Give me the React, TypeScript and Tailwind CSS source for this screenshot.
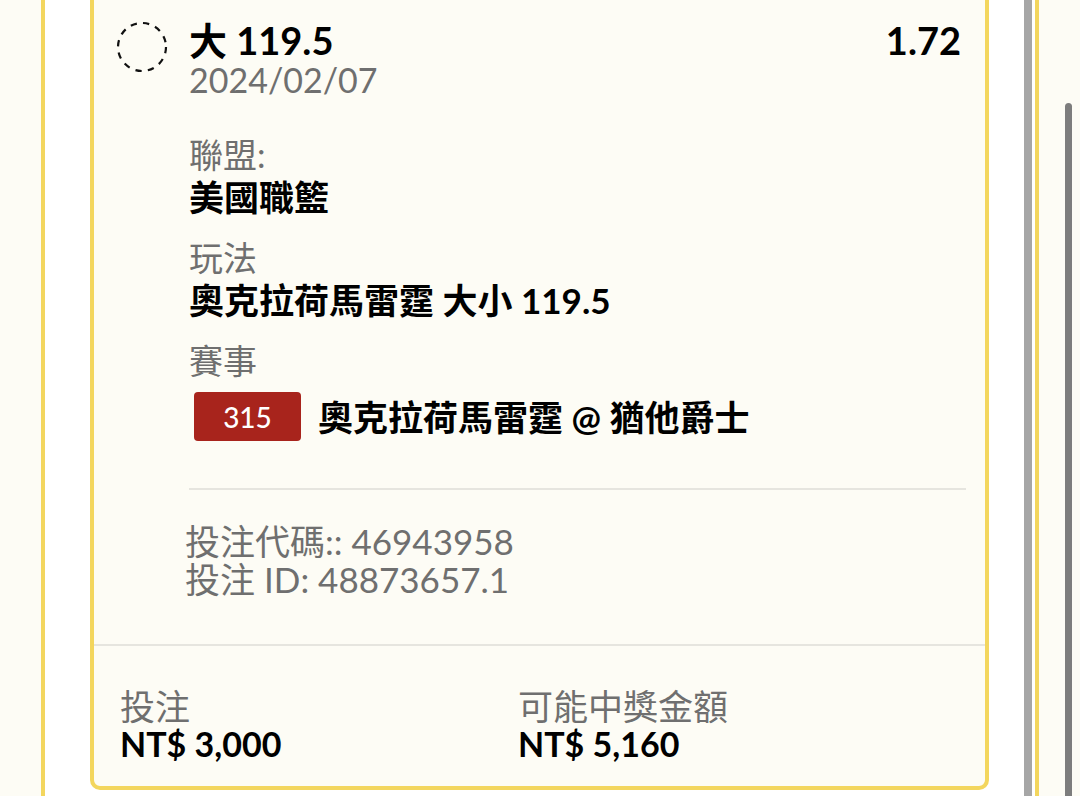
import React from 'react'

const font = "font-['Lato','Noto_Sans_CJK_TC',sans-serif]"

function DashedCircle() {
  return (
    <svg width="52" height="52" viewBox="0 0 52 52" className="mt-[1px] shrink-0">
      <circle cx="26" cy="26" r="24" fill="none" stroke="#111" strokeWidth="2.2" strokeDasharray="6.3 6.3" />
    </svg>
  )
}

function Field({ label, value }: { label: string; value: React.ReactNode }) {
  return (
    <div>
      <div className="text-[34px] leading-[42px] text-[#6f6f6f]">{label}</div>
      <div className="text-[35px] font-bold leading-[42px] text-black">{value}</div>
    </div>
  )
}

export default function App() {
  return (
    <div className={`flex h-[796px] overflow-hidden bg-[#fdfcf5] ${font}`}>
      <div className="ml-[41px] flex w-[998px] shrink-0 border-x-4 border-[#f3d65e] bg-white pl-[45px]">
        <div className="-mt-[12px] flex h-[802px] w-[899px] shrink-0 flex-col rounded-[10px] border-4 border-[#f3d65e] bg-[#fdfcf5]">
          {/* bet details */}
          <div className="flex h-[652px] pl-[22px] pt-[28px]">
            <DashedCircle />
            <div className="ml-[21px] flex flex-1 flex-col pr-[19px]">
              <div className="flex items-start justify-between">
                <div>
                  <div className="text-[38px] font-bold leading-[40px] text-black">大 119.5</div>
                  <div className="text-[34px] leading-[40px] text-[#6f6f6f]">2024/02/07</div>
                </div>
                <div className="mr-[5px] text-[38px] font-bold leading-[40px] text-black">1.72</div>
              </div>

              <div className="mt-[34px] flex flex-col gap-[19px]">
                <Field label="聯盟:" value="美國職籃" />
                <Field label="玩法" value="奧克拉荷馬雷霆 大小 119.5" />
                <div>
                  <div className="text-[34px] leading-[42px] text-[#6f6f6f]">賽事</div>
                  <div className="mt-[10px] flex items-center">
                    <span className="ml-[5px] flex h-[49px] w-[107px] items-center justify-center rounded-[4px] bg-[#a8241c] text-[28px] font-medium text-white">
                      315
                    </span>
                    <span className="ml-[17px] text-[35px] font-bold leading-[42px] text-black">
                      奧克拉荷馬雷霆 @ 猶他爵士
                    </span>
                  </div>
                </div>
              </div>

              <div className="mt-[47px] h-[2px] bg-[#e6e5df]" />

              <div className="-ml-[4px] mt-[32px] text-[35px] leading-[38px] text-[#6f6f6f]">
                <div>投注代碼:: 46943958</div>
                <div>投注 ID: 48873657.1</div>
              </div>
            </div>
          </div>

          {/* stake / payout */}
          <div className="flex border-t-2 border-[#e6e5df] pl-[26px] pt-[41px]">
            <div className="w-[398px]">
              <div className="text-[35px] leading-[38px] text-[#6f6f6f]">投注</div>
              <div className="text-[34px] font-bold leading-[38px] text-black">NT$ 3,000</div>
            </div>
            <div>
              <div className="text-[35px] leading-[38px] text-[#6f6f6f]">可能中獎金額</div>
              <div className="text-[34px] font-bold leading-[38px] text-black">NT$ 5,160</div>
            </div>
          </div>
        </div>
        <div className="ml-[35px] w-[8px] shrink-0 bg-[#a6a6a6]" />
      </div>
      <div className="ml-[26px] mt-[103px] w-[7px] shrink-0 rounded-t-full bg-[#7d7d7d]" />
    </div>
  )
}
